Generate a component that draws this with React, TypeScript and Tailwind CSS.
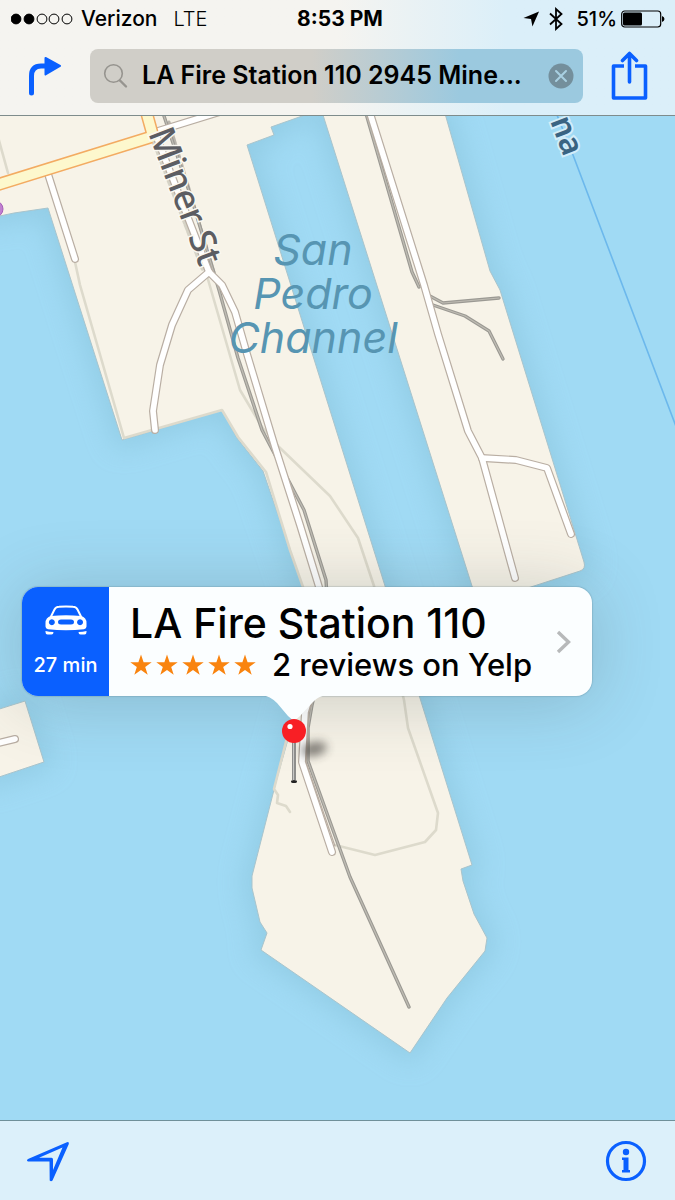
import { useState } from 'react';

const LAND = [
  'M0 110 H318 L305 115 L271 127 L274 135 L247 145 L385 586 L472 865 L461 869 L463 881 L474 914 L487 938 L485 951 L447 998 L410 1053 L261 950 L267 933 L260 922 L252 888 L252 876 L276 782 L292 725 L312 640 L303 587 L285 535 L263 471 L237 438 L222 410 L122 440 L48 208 L14 213 L-10 218 V110 Z',
  'M320 110 L323 115 L472 586 L478 604 L537 585 L580 571 Q586 569 584 562 L500 290 L490 271 L444 110 Z',
  'M-10 712 L25 701 L44 762 L-10 780 Z',
];

const PATHS = [
  'M-2 137 L8 173',
  'M75 262 L80 285 L124 438 L222 410 L238 437 L266 472 L290 550 L303 587',
  'M207 276 L240 390 L262 427 L279 447 L330 496 L358 538 L374 586 L404 700 L408 728 L438 813 L436 830 L425 842 L375 855 L335 845',
  'M289 730 L274 789 L278 795 L277 803 L286 806 L290 812',
];

const RAILS = [
  'M162 110 L192 200 L219 290 L238 358 L262 430 L304 510 L326 580 L329 630 L312 705 L308 728 L308 761 L350 877 L409 1007',
  'M365 110 L412 272 L419 287',
  'M428 295 L443 303 L499 298',
  'M430 304 L465 316 L489 331 L503 359',
];

const ROADS = [
  'M158 131 L226 110',
  'M48 174 L75 259',
  'M157 138 L209 272',
  'M209 272 L188 290 L172 325 L160 365 L153 411 L155 430',
  'M209 272 L222 285 L235 312 L247 354 L275 447 L300 525 L319 587 L327 640 L305 712 L302 762 L332 852',
  'M369 110 L424 285 L438 334 L468 431 L482 458 L515 578',
  'M482 458 L516 460 L547 468 L571 534',
  'M-10 745 L15 739',
];

const MAIN_ROAD = ['M-10 187 L151 137', 'M143 100 L153 136'];

function MapView() {
  return (
    <svg
      className="absolute inset-0 h-full w-full"
      viewBox="0 116 675 1004"
      preserveAspectRatio="xMidYMin slice"
      role="img"
      aria-label="Map"
    >
      <defs>
        <filter id="shore" x="-20%" y="-20%" width="140%" height="140%">
          <feGaussianBlur stdDeviation="13" />
        </filter>
      </defs>
      <rect x="-700" y="0" width="2100" height="1400" fill="#a0daf4" />
      <g filter="url(#shore)" fill="#8cc6de" stroke="#8cc6de" strokeWidth="16" opacity="0.65">
        {LAND.map((d) => (
          <path key={d} d={d} />
        ))}
      </g>
      <g fill="#f7f3e8" stroke="#a9c4cc" strokeWidth="1">
        {LAND.map((d) => (
          <path key={d} d={d} />
        ))}
      </g>
      <path d="M555 110 L573 155 L680 437" fill="none" stroke="#6cb8ec" strokeWidth="1.6" />
      <circle cx="-5" cy="209" r="8" fill="#c07fd0" stroke="#a55fb8" />

      <g fill="none" strokeLinejoin="round" strokeLinecap="round">
        <g stroke="#dddacc" strokeWidth="2.6">
          {PATHS.map((d) => (
            <path key={d} d={d} />
          ))}
        </g>
        <path d="M153 140 L203 270" stroke="#d6d3c6" strokeWidth="4" strokeDasharray="5 2" />
        <path d="M169 122 L214 272" stroke="#b8b4ab" strokeWidth="3" strokeDasharray="6 2" />
        <g stroke="#9b9993" strokeWidth="3.4">
          {RAILS.map((d) => (
            <path key={d} d={d} />
          ))}
        </g>
        <g stroke="#bfbcb3" strokeWidth="1.2">
          {RAILS.map((d) => (
            <path key={d} d={d} />
          ))}
        </g>
        <path d="M328 590 L333 640 L309 712 L306 762 L335 846" stroke="#b9aea3" strokeWidth="1.2" />
        <g stroke="#b9aea3" strokeWidth="8">
          {ROADS.map((d) => (
            <path key={d} d={d} />
          ))}
        </g>
        <g stroke="#ffffff" strokeWidth="5.6">
          {ROADS.map((d) => (
            <path key={d} d={d} />
          ))}
        </g>
        <g stroke="#f3ab62" strokeWidth="13" strokeLinecap="butt">
          {MAIN_ROAD.map((d) => (
            <path key={d} d={d} />
          ))}
        </g>
        <g stroke="#fdf8cd" strokeWidth="10">
          {MAIN_ROAD.map((d) => (
            <path key={d} d={d} />
          ))}
        </g>
      </g>

      <g className="font-['Noto_Sans',sans-serif]">
        <text
          transform="translate(148 133) rotate(69)"
          fontSize="36"
          fontWeight="500"
          fill="#5c5d62"
          stroke="#faf8f1"
          strokeWidth="3"
          paintOrder="stroke"
        >
          Miner St
        </text>
        <text
          transform="translate(550 121) rotate(69)"
          fontSize="32"
          fontWeight="600"
          fill="#3a6482"
          stroke="#d3edf9"
          strokeWidth="4"
          paintOrder="stroke"
        >
          na
        </text>
      </g>
      <g
        className="font-[Inter,sans-serif] italic"
        fontSize="43"
        fontWeight="400"
        fill="#5795b2"
        textAnchor="middle"
      >
        <text x="313" y="265">San</text>
        <text x="313" y="309">Pedro</text>
        <text x="313" y="353">Channel</text>
      </g>
    </svg>
  );
}

function StatusBar() {
  return (
    <div className="grid h-[37px] grid-cols-3 items-center pr-[10px] pl-[11px] text-[21px] text-black">
      <div className="flex items-center whitespace-nowrap font-medium">
        <svg width="62" height="12" viewBox="0 0 62 12" aria-hidden="true">
          {[5, 18, 31, 43, 56].map((cx, i) => (
            <circle key={cx} cx={cx} cy="6" r="4.9" fill={i < 2 ? '#000' : 'none'} stroke="#000" strokeWidth="1" />
          ))}
        </svg>
        <span className="ml-2">Verizon</span>
        <span className="ml-4 text-xl font-light">LTE</span>
      </div>
      <div className="pl-1 text-center font-bold">8:53 PM</div>
      <div className="flex items-center justify-end text-xl font-medium">
        <svg width="17" height="16" viewBox="0 0 18 16" aria-hidden="true">
          <path d="M17 0 L0.500 7 L8.500 8 L10 16 Z" />
        </svg>
        <svg className="ml-2 shrink-0" width="16" height="24" viewBox="0 0 16 24" fill="none" stroke="#000" strokeWidth="1.8" aria-hidden="true">
          <path d="M2 6.500 L13.500 17 L8 22 V2 L13.500 7 L2 17.500" />
        </svg>
        <span className="mr-1 ml-3">51%</span>
        <svg className="shrink-0" width="44" height="18" viewBox="0 0 44 18" aria-hidden="true">
          <rect x="0.700" y="1" width="39" height="16" rx="3" fill="none" stroke="#000" strokeWidth="1.200" />
          <rect x="2" y="2.500" width="19" height="13" rx="1.500" />
          <path d="M41 6 Q43.500 7 43.500 9 Q43.500 11 41 12 Z" />
        </svg>
      </div>
    </div>
  );
}

function SearchBar() {
  const [query, setQuery] = useState('LA Fire Station 110 2945 Mine...');

  return (
    <div className="mt-3 flex items-center">
      <button type="button" aria-label="Directions" className="ml-6 flex h-12 w-12 shrink-0 items-center">
        <svg width="40" height="44" viewBox="0 0 40 44" fill="none">
          <path d="M7.500 39 V22 Q7.500 12 17 12 H22" stroke="#0a60ff" strokeWidth="5" strokeLinecap="round" />
          <path d="M21.500 4 L36 12 L21.500 20.500 Z" fill="#0a60ff" stroke="#0a60ff" strokeWidth="2" strokeLinejoin="round" />
        </svg>
      </button>
      <div className="ml-[18px] flex h-[54px] min-w-0 flex-1 items-center rounded-lg bg-linear-to-r from-[#d0cec8] from-45% to-[#9bc9df] to-75% pr-2 pl-3">
        <svg className="shrink-0" width="28" height="26" viewBox="0 0 28 26" fill="none" stroke="#96948f" strokeLinecap="round" aria-hidden="true">
          <circle cx="11.500" cy="10.500" r="8.800" strokeWidth="1.600" />
          <path d="M18 17.500 L24 23.500" strokeWidth="2.400" />
        </svg>
        <input
          type="text"
          aria-label="Search"
          value={query}
          onChange={(e) => setQuery(e.target.value)}
          className="ml-3 min-w-0 flex-1 bg-transparent text-[25px] font-semibold text-black outline-none"
        />
        <button type="button" aria-label="Clear search" onClick={() => setQuery('')} className="ml-2 shrink-0">
          <svg width="28" height="28" viewBox="0 0 28 28">
            <circle cx="14" cy="14" r="12.500" fill="#748f9c" />
            <path d="M9 9 L19 19 M19 9 L9 19" stroke="#a9d0e2" strokeWidth="2" strokeLinecap="round" />
          </svg>
        </button>
      </div>
      <button type="button" aria-label="Share" className="mr-6 ml-6 shrink-0">
        <svg width="44" height="50" viewBox="0 0 44 50" fill="none" stroke="#0a60ff" strokeWidth="3.600" strokeLinejoin="round">
          <path d="M17 15 H6.500 V47 H38.500 V15 H28" />
          <path d="M22.500 31 V4 M15.500 9.500 L22.500 2.500 L29.500 9.500" strokeLinecap="round" />
        </svg>
      </button>
    </div>
  );
}

function CarIcon() {
  return (
    <svg width="44" height="30" viewBox="0 0 44 30" aria-hidden="true">
      <path d="M6.500 12.500 L10.500 4.500 Q11.700 2 15 1.800 Q22 1 29 1.800 Q32.300 2 33.500 4.500 L37.500 12.500" fill="none" stroke="#fff" strokeWidth="2" />
      <path
        fillRule="evenodd"
        fill="#fff"
        d="M7 11 Q22 9.500 37 11 Q42.500 12.500 42.500 18 V21.500 Q42.500 23.800 40 24.200 Q22 26.500 4 24.200 Q1.500 23.800 1.500 21.500 V18 Q1.500 12.500 7 11 Z M7.800 14.200 a3 3 0 1 0 0.100 0 Z M36 14.200 a3 3 0 1 0 0.100 0 Z M17 14.500 Q14 14.500 14 17 Q14 19.500 17 19.500 H27 Q30 19.500 30 17 Q30 14.500 27 14.500 Z"
      />
      <path d="M1.500 26 Q5 26.800 9.500 27 Q9.500 29.500 7.500 29.500 H3.500 Q1.500 29.500 1.500 27 Z M42.500 26 Q39 26.800 34.500 27 Q34.500 29.500 36.500 29.500 H40.500 Q42.500 29.500 42.500 27 Z" fill="#fff" />
    </svg>
  );
}

function Stars() {
  return (
    <span className="flex gap-1" role="img" aria-label="5 stars">
      {[0, 1, 2, 3, 4].map((i) => (
        <svg key={i} width="22" height="22" viewBox="0 0 22 22" fill="#f9840f">
          <path d="M11 0.500 L13.600 8.200 H21.700 L15.200 13 L17.700 20.800 L11 16 L4.300 20.800 L6.800 13 L0.300 8.200 H8.400 Z" />
        </svg>
      ))}
    </span>
  );
}

function Callout() {
  return (
    <div className="absolute top-[471px] left-[22px] h-[109px] w-[570px] rounded-2xl shadow-[0_4px_70px_0_rgba(60,70,70,0.24)]">
      <div className="flex h-full overflow-hidden rounded-2xl bg-[#fbfeff] shadow-[0_0_1px_1px_rgba(80,110,120,0.2)]">
        <button
          type="button"
          className="flex w-[87px] shrink-0 flex-col items-center bg-[#0a60ff] pt-[18px] text-xl font-medium text-white"
        >
          <CarIcon />
          <span className="mt-4 whitespace-nowrap">27 min</span>
        </button>
        <a href="#details" className="flex min-w-0 flex-1 items-center pl-[21px] text-black">
          <div className="flex-1 whitespace-nowrap pt-0.5">
            <div className="text-[41px] leading-[44px] font-medium">LA Fire Station 110</div>
            <div className="flex items-center text-[31px] leading-10 font-medium">
              <Stars />
              <span className="ml-4">2 reviews on Yelp</span>
            </div>
          </div>
          <svg className="mr-5" width="16" height="24" viewBox="0 0 16 24" fill="none" stroke="#b7b9ba" strokeWidth="3.400" aria-hidden="true">
            <path d="M2 2 L12.500 12 L2 22" />
          </svg>
        </a>
      </div>
      {/* pointer and pin hang below the card */}
      <svg className="absolute top-[108px] left-[240px]" width="80" height="92" viewBox="0 0 80 92" aria-hidden="true">
        <defs>
          <filter id="pinShadow" x="-50%" y="-80%" width="200%" height="260%">
            <feGaussianBlur stdDeviation="5" />
          </filter>
        </defs>
        <ellipse cx="52" cy="54" rx="13" ry="7" fill="#35332f" opacity="0.600" filter="url(#pinShadow)" transform="rotate(-12 52 54)" />
        <path d="M0 0 H66 Q56 1 51 7 L38 21 Q32 28 26 21 L15 8 Q8 1 0 0 Z" fill="#fbfeff" />
        <rect x="30" y="44" width="4" height="41" fill="#8e8e8c" />
        <rect x="31" y="44" width="1" height="41" fill="#c8c8c6" />
        <ellipse cx="32" cy="86.500" rx="3" ry="1.500" fill="#222" />
        <circle cx="32" cy="36" r="12" fill="#f81f25" />
        <circle cx="28" cy="31.500" r="2.600" fill="#fff" />
      </svg>
    </div>
  );
}

export default function App() {
  return (
    <div className="flex min-h-screen flex-col font-[Inter,'Liberation_Sans',sans-serif]">
      <header className="h-[116px] border-b border-[#7e8c8c] bg-linear-to-r from-[#f5f4f0] from-50% to-[#dbeff9] to-75%">
        <StatusBar />
        <SearchBar />
      </header>

      <main className="relative min-h-[800px] flex-1 overflow-hidden">
        <MapView />
        <Callout />
      </main>

      <footer className="flex h-20 items-center justify-between border-t border-[#6f9099] bg-[#dcf0fa] px-6">
        <button type="button" aria-label="Current location">
          <svg width="48" height="44" viewBox="0 0 48 44" fill="none">
            <path
              fill="#0a60ff"
              fillRule="evenodd"
              d="M43.500 3 Q45.500 3 44.800 5 L28.500 41.500 Q27 43 25.700 41.500 L25.500 22.500 L4 22.500 Q2 21.500 4 20 Z M38.500 8.500 L15 18.800 L27.500 18.800 Q29 19 29 20.500 L29 31 Z"
            />
          </svg>
        </button>
        <button type="button" aria-label="Info" className="mr-1">
          <svg width="42" height="42" viewBox="0 0 42 42">
            <circle cx="21" cy="21" r="18.500" fill="none" stroke="#0a60ff" strokeWidth="3.200" />
            <circle cx="21" cy="12" r="3.200" fill="#0a60ff" />
            <path d="M17 17.500 H23.500 V30 H25 V32.500 H17 V30 H18.500 V20 H17 Z" fill="#0a60ff" />
          </svg>
        </button>
      </footer>
    </div>
  );
}
